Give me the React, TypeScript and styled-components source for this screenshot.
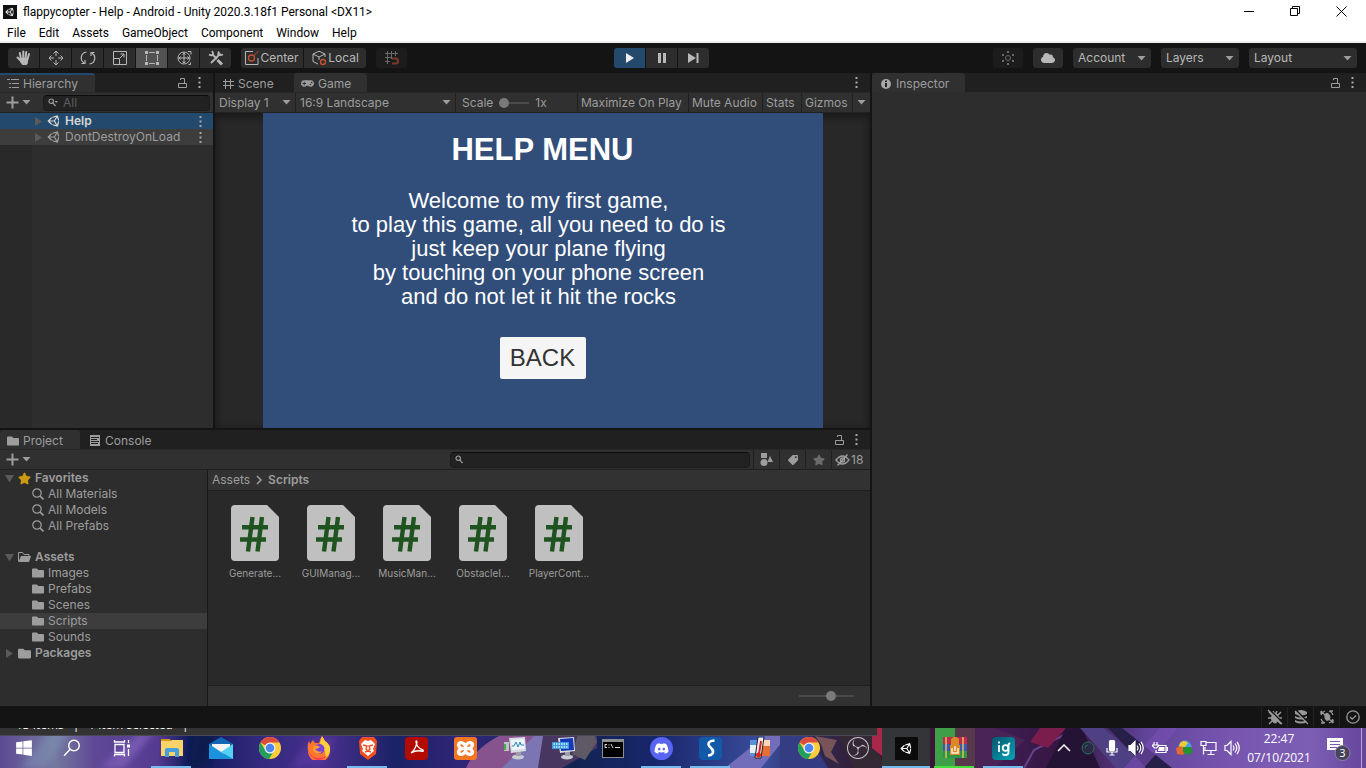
import React from "react";
import styled, { createGlobalStyle, css } from "styled-components";
import { FaUnity, FaDiscord, FaStar, FaTag, FaCloud, FaGamepad, FaFolder, FaWindows } from "react-icons/fa";
import { SiObsstudio } from "react-icons/si";

const ui = '"Inter", "Liberation Sans", sans-serif';
const win = '"Open Sans", "Noto Sans", sans-serif';

const Global = createGlobalStyle`
  * { box-sizing: border-box; }
  body { margin: 0; background: #141414; }
  button, select, input { font: inherit; color: inherit; margin: 0; padding: 0; border: 0; background: none; border-radius: 0; }
  ul { list-style: none; margin: 0; padding: 0; }
  svg { display: block; flex: none; }
`;

const Screen = styled.div`
  display: flex;
  flex-direction: column;
  min-height: 100vh;
  font: 12px/16px ${ui};
  color: #9d9d9d;
  background: #141414;
  white-space: nowrap;
`;

/* ---------- window chrome ---------- */
const TitleBar = styled.header`
  display: flex;
  align-items: center;
  height: 23px;
  padding: 0 2px 0 3px;
  background: #fff;
  color: #000;
  font: 12px/16px "Roboto", sans-serif;
`;
const AppIcon = styled.span`
  display: grid;
  place-items: center;
  width: 14px;
  height: 14px;
  margin-right: 6px;
  background: #111;
  color: #eee;
`;
const WindowTitle = styled.h1`
  flex: 1;
  margin: 0;
  font: inherit;
`;
const WindowButton = styled.button`
  display: grid;
  place-items: center;
  width: 46px;
  height: 22px;
`;
const MenuBar = styled.nav`
  display: flex;
  gap: 13px;
  height: 20px;
  padding-left: 7px;
  background: #fff;
  border-bottom: 2px solid #f0f0f0;
  color: #000;
  font: 12px/20px "Roboto", sans-serif;
`;

/* ---------- editor toolbar ---------- */
const Toolbar = styled.div`
  display: flex;
  height: 30px;
  padding: 5px 0;
  color: #b8b8b8;
`;
const ToolsArea = styled.div`
  display: flex;
  flex: none;
  width: calc(50% - 69px);
  padding-left: 8px;
`;
const ToolGroup = styled.div<{ $after?: number }>`
  display: flex;
  gap: 1px;
  margin-right: ${(p) => p.$after ?? 0}px;
  border-radius: 3px;
  overflow: hidden;
`;
const ToolButton = styled.button<{ $w?: number; $tone?: "active" | "play" | "dim" }>`
  display: flex;
  align-items: center;
  justify-content: center;
  gap: 1px;
  width: ${(p) => p.$w ?? 31}px;
  height: 20px;
  background: ${(p) => (p.$tone === "active" ? "#525252" : p.$tone === "play" ? "#234a6c" : p.$tone === "dim" ? "#1c1c1c" : "#2d2d2d")};
  color: ${(p) => (p.$tone === "dim" ? "#6a6a6a" : p.$tone === "play" ? "#ececec" : "inherit")};
`;
const ToolbarRight = styled.div`
  display: flex;
  flex: 1;
  justify-content: flex-end;
  gap: 10px;
  padding-right: 9px;
`;

const SelectWrap = styled.label<{ $w: number; $boxed?: boolean }>`
  display: flex;
  align-items: center;
  position: relative;
  width: ${(p) => p.$w}px;
  height: 20px;
  ${(p) =>
    p.$boxed
      ? css`
          background: #2d2d2d;
          border-radius: 3px;
        `
      : css`
          border-right: 1px solid #202020;
        `}
  select {
    appearance: none;
    width: 100%;
    height: 20px;
    padding-left: ${(p) => (p.$boxed ? 5 : 4)}px;
    outline: 0;
  }
  svg {
    position: absolute;
    right: ${(p) => (p.$boxed ? 5 : 4)}px;
    pointer-events: none;
  }
`;

/* ---------- docking ---------- */
const Dock = styled.main`
  display: flex;
  flex: 1;
  gap: 2px;
`;
const DockLeft = styled.div`
  display: flex;
  flex-direction: column;
  flex: 870 1 0;
  gap: 2px;
  min-width: 0;
`;
const DockRow = styled.div`
  display: flex;
  flex: 355 1 0;
  gap: 2px;
`;
const Panel = styled.section<{ $grow: number }>`
  display: flex;
  flex-direction: column;
  flex: ${(p) => p.$grow} 1 0;
  min-width: 0;
  background: #2d2d2d;
`;
const TabBar = styled.div`
  display: flex;
  align-items: center;
  height: 19px;
  padding-right: 5px;
  background: #202020;
`;
const Tab = styled.button<{ $w: number; $on?: boolean; $focus?: boolean }>`
  display: flex;
  align-items: center;
  gap: 4px;
  width: ${(p) => p.$w}px;
  height: 19px;
  padding-left: 7px;
  border-top: 2px solid ${(p) => (p.$focus ? "#234a6c" : "transparent")};
  border-radius: ${(p) => (p.$focus ? 0 : 3)}px 3px 0 0;
  background: ${(p) => (p.$on ? "#303030" : "transparent")};
  background-clip: border-box;
`;
const Spacer = styled.div`
  flex: 1;
`;
const IconButton = styled.button`
  display: grid;
  place-items: center;
  width: 17px;
  height: 18px;
`;
const PanelBar = styled.div`
  display: flex;
  align-items: center;
  height: 21px;
  background: #303030;
  border-top: 1px solid #282828;
  border-bottom: 1px solid #202020;
`;
const AddButton = styled.button`
  display: flex;
  flex: none;
  align-items: center;
  gap: 3px;
  width: 39px;
  height: 18px;
  padding-left: 6px;
`;
const SearchBox = styled.label<{ $w?: number }>`
  display: flex;
  align-items: center;
  gap: 5px;
  ${(p) => (p.$w ? `width: ${p.$w}px;` : "flex: 1;")}
  min-width: 0;
  height: 16px;
  margin: 0 3px 0 4px;
  padding-left: 4px;
  background: #222;
  border: 1px solid #1b1b1b;
  border-top-color: #0c0c0c;
  border-radius: 4px;
  input {
    flex: 1;
    min-width: 0;
    height: 14px;
    outline: 0;
  }
  input::placeholder {
    color: #5c5c5c;
    opacity: 1;
  }
`;

/* ---------- hierarchy ---------- */
const SceneList = styled.ul`
  flex: 1;
  background: linear-gradient(90deg, #292929 32px, #2d2d2d 32px);
`;
const SceneRow = styled.li<{ $on?: boolean }>`
  display: flex;
  align-items: center;
  gap: 4px;
  height: 16px;
  padding: 0 4px 0 34px;
  background: ${(p) => (p.$on ? "#234a6c" : "#3d3d3d")};
  color: ${(p) => (p.$on ? "#d6d6d6" : "#9d9d9d")};
  font-weight: ${(p) => (p.$on ? 600 : 400)};
`;

/* ---------- game view ---------- */
const ScaleControl = styled.label`
  display: flex;
  align-items: center;
  gap: 6px;
  flex: 1;
  height: 20px;
  padding-left: 6px;
`;
const Slider = styled.input<{ $w: number }>`
  appearance: none;
  width: ${(p) => p.$w}px;
  height: 10px;
  background: linear-gradient(#4b4b4b, #4b4b4b) center / 100% 2px no-repeat;
  &::-webkit-slider-thumb {
    appearance: none;
    width: 10px;
    height: 10px;
    border-radius: 50%;
    background: #7a7a7a;
  }
`;
const BarButton = styled.button<{ $w: number; $text?: boolean }>`
  display: flex;
  align-items: center;
  justify-content: ${(p) => (p.$text ? "flex-start" : "center")};
  gap: 1px;
  width: ${(p) => p.$w}px;
  height: 20px;
  padding-left: ${(p) => (p.$text ? 3 : 0)}px;
  border-left: 1px solid #202020;
`;
const GameArea = styled.div`
  display: flex;
  justify-content: center;
  flex: 1;
  min-height: 0;
  background: #282828;
  box-shadow: inset 0 5px 8px -2px #181818, inset 0 0 6px #1c1c1c;
`;
const GameScreen = styled.div`
  display: flex;
  flex-direction: column;
  align-items: center;
  width: 560px;
  max-width: 100%;
  background: #314d79;
  color: #fff;
  font-family: "Liberation Sans", sans-serif;
`;
const HelpHeading = styled.h2`
  margin: 19px 0 21px;
  font-size: 31px;
  line-height: 36px;
  font-weight: 700;
`;
const HelpText = styled.p`
  margin: 0 8px 28px 0;
  font-size: 22px;
  line-height: 24px;
  text-align: center;
`;
const BackButton = styled.button`
  width: 86px;
  height: 42px;
  border-radius: 2px;
  background: #f5f5f5;
  color: #323232;
  font-size: 24px;
`;

/* ---------- project ---------- */
const ProjectPanel = styled.section`
  display: flex;
  flex-direction: column;
  flex: 276 1 0;
  background: #2d2d2d;
`;
const ProjectBody = styled.div`
  display: flex;
  flex: 1;
`;
const Tree = styled.ul`
  width: 208px;
  border-right: 1px solid #1a1a1a;
`;
const TreeRow = styled.li<{ $child?: boolean; $on?: boolean; $before?: boolean }>`
  display: flex;
  align-items: center;
  gap: 4px;
  height: 16px;
  margin-top: ${(p) => (p.$before ? 15 : 0)}px;
  padding-left: ${(p) => (p.$child ? 32 : 5)}px;
  background: ${(p) => (p.$on ? "#3d3d3d" : "transparent")};
  font-weight: ${(p) => (p.$child ? 400 : 600)};
`;
const Assets = styled.div`
  display: flex;
  flex-direction: column;
  flex: 1;
  background: #292929;
`;
const Breadcrumb = styled.nav`
  display: flex;
  align-items: center;
  gap: 5px;
  height: 21px;
  padding-left: 4px;
  background: #323232;
  border-bottom: 1px solid #202020;
  b { font-weight: 600; }
`;
const FileGrid = styled.ul`
  display: flex;
  flex-wrap: wrap;
  flex: 1;
  align-content: flex-start;
  padding: 14px 9px;
`;
const FileItem = styled.li`
  display: flex;
  flex-direction: column;
  align-items: center;
  gap: 5px;
  width: 76px;
  font-size: 10px;
  line-height: 14px;
`;
const AssetsFooter = styled.div`
  display: flex;
  align-items: center;
  justify-content: flex-end;
  height: 21px;
  padding-right: 16px;
  background: #323232;
  border-top: 1px solid #202020;
`;
const StatusBar = styled.footer`
  display: flex;
  justify-content: flex-end;
  align-items: center;
  height: 22px;
  padding-right: 1px;
  color: #999;
`;
const StatusButton = styled.button`
  display: grid;
  place-items: center;
  width: 26px;
  height: 20px;
  border-left: 1px solid #222;
`;

/* ---------- taskbar ---------- */
const Taskbar = styled.footer`
  display: flex;
  position: relative;
  height: 40px;
  overflow: hidden;
  background: #3c2a78;
  color: #fff;
  font: 12px/19px ${win};
`;
const Wallpaper = styled.svg`
  position: absolute;
  inset: 0;
  width: 100%;
  height: 100%;
`;
const ExplorerEdge = styled.div`
  display: flex;
  align-items: flex-end;
  gap: 9px;
  position: absolute;
  top: 0;
  left: 0;
  width: 877px;
  height: 8px;
  padding: 0 8px 1px 16px;
  overflow: hidden;
  background: #333;
  color: #fff;
  border-bottom: 1px solid #4a4a52;
`;
const TaskIcons = styled.div`
  display: flex;
  position: relative;
  flex: 1;
`;
const Task = styled.button<{ $w?: number; $line?: string; $bg?: string }>`
  display: grid;
  place-items: center;
  position: relative;
  width: ${(p) => p.$w ?? 49}px;
  height: 40px;
  background: ${(p) => p.$bg ?? "none"};
  ${(p) =>
    p.$line &&
    css`
      &::after {
        content: "";
        position: absolute;
        left: ${p.$w === 48 ? 0 : 4}px;
        right: ${p.$w === 48 ? 0 : 5}px;
        bottom: 0;
        height: 2px;
        background: ${p.$line};
      }
    `}
`;
const Tile = styled.span<{ $bg: string; $r?: number }>`
  display: grid;
  place-items: center;
  width: 23px;
  height: 23px;
  border-radius: ${(p) => p.$r ?? 4}px;
  background: ${(p) => p.$bg};
  color: #fff;
`;
const Tray = styled.div`
  display: flex;
  align-items: center;
  position: relative;
`;
const TrayButton = styled.button`
  display: grid;
  place-items: center;
  width: 24px;
  height: 40px;
`;
const Clock = styled.time`
  display: flex;
  flex-direction: column;
  align-items: center;
  width: 70px;
`;
const NotifyButton = styled.button`
  display: grid;
  place-items: center;
  width: 48px;
  height: 40px;
  border-right: 1px solid #b5a5d8;
  margin-right: 4px;
`;

/* ---------- icons ---------- */
type IconProps = { w?: number; h?: number; vb?: string; sw?: number; fill?: string; stroke?: string; children: React.ReactNode };
const Icon = ({ w = 16, h, vb, sw = 1, fill = "none", stroke = "currentColor", children }: IconProps) => (
  <svg width={w} height={h ?? w} viewBox={vb ?? `0 0 ${w} ${h ?? w}`} fill={fill} stroke={stroke} strokeWidth={sw} aria-hidden="true">
    {children}
  </svg>
);
const Caret = () => (
  <Icon w={9} h={5} fill="#9d9d9d" stroke="none"><path d="M0.500 0h8L4.500 4.500z" /></Icon>
);
const Kebab = () => (
  <Icon w={3} h={13} fill="#a8a8a8" stroke="none"><path d="M0.500 1h2v2h-2zM0.500 5.500h2v2h-2zM0.500 10h2v2h-2z" /></Icon>
);
const Lock = () => (
  <Icon w={9} h={12}><path d="M.5 6.500h8v4h-8zM2.500 3V1.500h4v5" /></Icon>
);
const Plus = () => (
  <Icon w={13} h={13} sw={2}><path d="M6.500 0.500v12M0.500 6.500h12" /></Icon>
);
const Twisty = ({ open }: { open?: boolean }) => (
  <Icon w={9} h={9} fill="#5a5a5a" stroke="none"><path d={open ? "M0 1h9L4.500 8.500z" : "M1 0v9l7-4.500z"} /></Icon>
);
const Magnifier = () => (
  <Icon w={12} h={12} sw={1.2}><circle cx="5" cy="5" r="4.200" /><path d="M8 8l3.500 3.500" strokeWidth="1.600" /></Icon>
);
const SmallSearch = ({ caret }: { caret?: boolean }) => (
  <Icon w={10} h={9} sw={1.2}><circle cx="3.200" cy="3.200" r="2.200" /><path d="M4.800 4.800L7.500 8" />{caret && <path d="M6.500 3h3.500L8.200 5z" fill="currentColor" stroke="none" />}</Icon>
);
const HashFile = () => (
  <Icon w={48} h={56} stroke="none">
    <path d="M4 0h32l12 12v40a4 4 0 0 1-4 4H4a4 4 0 0 1-4-4V4a4 4 0 0 1 4-4z" fill="#c0c0c0" />
    <path d="M21.500 12L17 46.500M31 12L26.500 46.500M11 22.200h26M9 34.500h26" stroke="#1f5420" strokeWidth="4.400" />
  </Icon>
);
const ChromeLogo = () => (
  <Icon w={22} h={22} stroke="none">
    <circle cx="11" cy="11" r="11" fill="#f9cc3c" />
    <path d="M11 11L1.500 5.500A11 11 0 0 1 20.500 5.500H11z" fill="#dc4a3e" />
    <path d="M1.500 5.500A11 11 0 0 0 10 22l5.200-8.500L11 16 6.500 13.500z" fill="#20a05a" />
    <circle cx="11" cy="11" r="5.500" fill="#f2f2f2" /><circle cx="11" cy="11" r="4.300" fill="#4a86ee" />
  </Icon>
);
const Monitor = ({ keys }: { keys?: boolean }) => (
  <Icon w={24} h={24} stroke="none">
    <ellipse cx="15" cy="21" rx="6" ry="2.500" fill="#c9ccd2" /><path d="M13 15h5v5h-5z" fill="#9a9fa8" />
    <path d="M6 2l16-1 1 14-15 2z" fill="#d8dbe0" />
    {keys ? (
      <><path d="M8 3l13-1 1 12-13 1z" fill="#1438b5" /><path d="M0 6h17v7H0z" fill="#3c9ae0" /><path d="M1.500 8h14M1.500 11h14" stroke="#d5edff" strokeWidth="1.500" strokeDasharray="1.500 1" /></>
    ) : (
      <><path d="M8 4l13-1 1 10-13 1z" fill="#eaf6fc" /><path d="M9 10h2l2-4 2 5 2-5 1 3h3" stroke="#3185b5" fill="none" /><path d="M1 6h5v9H1z" fill="#bcc4c4" /><path d="M2 8v6" stroke="#47ac47" strokeWidth="2" /></>
    )}
  </Icon>
);
const Speaker = ({ solid }: { solid?: boolean }) => (
  <Icon w={16} h={16} sw={1.2}>
    <path d="M1 5.500h2l4-4v13l-4-4H1z" fill={solid ? "currentColor" : "none"} />
    <path d="M9 5.500q2 2.500 0 5M11 3.500q3.500 4.500 0 9M13 1.800q4.500 6.200 0 12.400" />
  </Icon>
);

const line = "#76b9ed";

const Wall = () => (
  <Wallpaper viewBox="0 0 1366 40" preserveAspectRatio="none" aria-hidden="true">
    <defs>
      <linearGradient id="sky">
        <stop offset="0" stopColor="#5d4a94" /><stop offset=".04" stopColor="#74799f" /><stop offset=".07" stopColor="#5f4896" />
        <stop offset=".115" stopColor="#553b91" /><stop offset=".14" stopColor="#0d1a57" /><stop offset=".19" stopColor="#33297f" />
        <stop offset=".24" stopColor="#47308c" /><stop offset=".29" stopColor="#1b2265" /><stop offset=".34" stopColor="#302679" />
        <stop offset=".42" stopColor="#122352" /><stop offset=".48" stopColor="#18276c" /><stop offset=".56" stopColor="#3b4d9c" />
        <stop offset=".6" stopColor="#30294e" /><stop offset=".66" stopColor="#38101f" /><stop offset=".72" stopColor="#421f5c" />
        <stop offset=".78" stopColor="#35153f" /><stop offset=".84" stopColor="#61459a" /><stop offset=".9" stopColor="#7855af" />
        <stop offset=".96" stopColor="#7c5fb5" /><stop offset="1" stopColor="#65459b" />
      </linearGradient>
      <filter id="soft"><feGaussianBlur stdDeviation="3" /></filter>
    </defs>
    <rect width="1366" height="40" fill="url(#sky)" />
    <g filter="url(#soft)">
      <path d="M20 40L50 4h20L45 40z" fill="#7f93b8" opacity=".5" />
      <path d="M100 40l40-36h14l-30 36z" fill="#7658b0" />
      <path d="M195 0h24l-12 40h-20z" fill="#071a50" />
      <path d="M290 40l20-30h26l-15 30z" fill="#5938a0" opacity=".7" />
    </g>
    <path d="M466 40q10-24 50-40h38l-40 40z" fill="#86538e" />
    <path d="M502 40l40-40h8l14 12-22 28z" fill="#7b75b3" />
    <path d="M543 8l44-8h10v20l-35 20h-24z" fill="#47365f" />
    <path d="M576 28l16-28 5 14-12 18zM578 6h18l-9 18-15 4z" fill="#5f5966" />
    <path d="M725 40l40-32h22l-26 32z" fill="#716dbb" /><path d="M780 40V8h28l20 32z" fill="#343d83" />
    <path d="M815 8l22 4-6 12 8 12-14-8-4-12z" fill="#79535a" /><path d="M838 8h36l10 32h-30z" fill="#352835" />
    <path d="M872 0h10v28l-10-8z" fill="#a9284a" />
    <path d="M975 0h20l30 12-30 28h-20z" fill="#4a2456" /><path d="M1024 40l10-18 32-16" fill="none" stroke="#63438a" strokeWidth="2" />
    <path d="M1040 0h26l-18 20-18-6z" fill="#7b1d4c" /><path d="M1066 0h16l18 40h-54z" fill="#251335" />
    <path d="M1080 0h24l42 40h-30z" fill="#4f3f83" /><path d="M1108 0h14l50 40h-26z" fill="#262048" /><path d="M1160 0h18l-34 40h-20z" fill="#7a4eb5" opacity=".6" />
  </Wallpaper>
);

const menus = ["File", "Edit", "Assets", "GameObject", "Component", "Window", "Help"];
const files = ["Generate...", "GUIManag...", "MusicMan...", "ObstacleI...", "PlayerCont..."];
const folders = ["Images", "Prefabs", "Scenes", "Scripts", "Sounds"];

export default function App() {
  return (
    <Screen>
      <Global />
      <TitleBar>
        <AppIcon><FaUnity size={10} /></AppIcon>
        <WindowTitle>flappycopter - Help - Android - Unity 2020.3.18f1 Personal &lt;DX11&gt;</WindowTitle>
        <WindowButton aria-label="Minimize"><Icon w={11}><path d="M0 5.500h10" /></Icon></WindowButton>
        <WindowButton aria-label="Restore"><Icon w={11}><path d="M.5 2.500h7v7h-7zM2.500 2.500v-2h7v7h-2" /></Icon></WindowButton>
        <WindowButton aria-label="Close"><Icon w={11}><path d="M.5.5l10 10M10.500.5l-10 10" /></Icon></WindowButton>
      </TitleBar>
      <MenuBar>{menus.map((m) => <span key={m}>{m}</span>)}</MenuBar>

      <Toolbar>
        <ToolsArea>
          <ToolGroup $after={10}>
            <ToolButton aria-label="Hand">
              <Icon w={16} sw={2}><path d="M5 9L3.800 3M7.300 8V1.500M9.600 8l.6-6M11.500 9l1.500-5M5 11L1.500 7.500" strokeLinecap="round" /><path d="M4 8h8.500l-.8 5.500L10.500 15h-4L4 12z" fill="currentColor" stroke="none" /></Icon>
            </ToolButton>
            <ToolButton aria-label="Move">
              <Icon w={16}><path d="M8 1V6M8 10v5M1 8H6M10 8h5M5.500 3.500L8 1l2.500 2.500M5.500 12.500L8 15l2.500-2.500M3.500 5.500L1 8l2.500 2.500M12.500 5.500L15 8l-2.500 2.500" /></Icon>
            </ToolButton>
            <ToolButton aria-label="Rotate">
              <Icon w={16} sw={1.200}><path d="M6.500 2A6 6 0 0 0 4 13M1.500 13.500h3.500V10M9.500 14A6 6 0 0 0 12 3M14.500 2.500H11V6" /></Icon>
            </ToolButton>
            <ToolButton aria-label="Scale">
              <Icon w={16}><path d="M1.500 1.500h13v13h-13zM1.500 8.500h6v6M8 8l4-4M8.500 4H12v3.500" /></Icon>
            </ToolButton>
            <ToolButton $tone="active" aria-label="Rect">
              <Icon w={16}><path d="M5 2.500h6M5 13.500h6M2.500 5v6M13.500 5v6" /><path d="M1 1h3v3h-3zM12 1h3v3h-3zM1 12h3v3h-3zM12 12h3v3h-3z" fill="currentColor" stroke="none" /></Icon>
            </ToolButton>
            <ToolButton aria-label="Transform">
              <Icon w={16}><circle cx="8" cy="8" r="6" /><path d="M8 3v10M3 8h10M6.500 4.500L8 3l1.500 1.500M6.500 11.500L8 13l1.500-1.500M4.500 6.500L3 8l1.500 1.500M11.500 6.500L13 8l-1.500 1.500M12 1.500h3v3M12.500 14.500h2v-2" /></Icon>
            </ToolButton>
            <ToolButton aria-label="Custom tools">
              <Icon w={16} sw={1.800}><path d="M4.500 4.500L9 9M12.500 3.500L3 13" /><path d="M9.500 10l4.500 4.500" strokeWidth="3" /><path d="M1 4.500q3 1.500 3.800 0T4 1M11 1.500q-1.500 3 0 3.500t4-.5" /></Icon>
            </ToolButton>
          </ToolGroup>
          <ToolGroup $after={10}>
            <ToolButton $w={62}>
              <Icon w={14} h={16}><path d="M13 8v6.500H.5v-13H8" /><circle cx="6.500" cy="8" r="3" stroke="#c2512f" strokeWidth="1.400" /><path d="M9 5.500L13.500 1" stroke="#c2512f" /></Icon>Center
            </ToolButton>
            <ToolButton $w={62}>
              <Icon w={16}><path d="M14 7V4L8 1.200 2 4v7.500l5 2.500M2 4l6 3 6-3M8 7v3" /><circle cx="12" cy="12" r="2.500" stroke="#c2512f" strokeWidth="1.400" /></Icon>Local
            </ToolButton>
          </ToolGroup>
          <ToolGroup>
            <ToolButton $tone="dim" aria-label="Grid snapping">
              <Icon w={16}><path d="M1 3.500h13M1 7.500h6M1 11.500h5M3.500 1v13M7.500 1v8M11.500 1v5" /><path d="M8 8.500h4q2 0 2 2.500t-2 2.500H8" stroke="#7a3a26" strokeWidth="2" /></Icon>
            </ToolButton>
          </ToolGroup>
        </ToolsArea>
        <ToolGroup>
          <ToolButton $tone="play" aria-label="Play"><Icon w={10} fill="currentColor" stroke="none"><path d="M1 0v10l8-5z" /></Icon></ToolButton>
          <ToolButton aria-label="Pause"><Icon w={10} fill="currentColor" stroke="none"><path d="M1 0h3v10H1zM6 0h3v10H6z" /></Icon></ToolButton>
          <ToolButton aria-label="Step"><Icon w={11} h={10} fill="currentColor" stroke="none"><path d="M0 0v10l8-5zM8.500 0h2v10h-2z" /></Icon></ToolButton>
        </ToolGroup>
        <ToolbarRight>
          <ToolGroup><ToolButton $w={30} $tone="dim" aria-label="Collab">
            <Icon w={14}><circle cx="7" cy="7" r="2.500" /><path d="M7 0v2M7 12v2M1 4h2M1 10h2M11 4h2M11 10h2" strokeWidth="2" /></Icon>
          </ToolButton></ToolGroup>
          <ToolGroup><ToolButton $w={30} aria-label="Services"><FaCloud size={14} /></ToolButton></ToolGroup>
          {[["Account", 78], ["Layers", 78], ["Layout", 108]].map(([t, w]) => (
            <SelectWrap key={t} $boxed $w={w as number}><select aria-label={t as string}><option>{t}</option></select><Caret /></SelectWrap>
          ))}
        </ToolbarRight>
      </Toolbar>

      <Dock>
        <DockLeft>
          <DockRow>
            <Panel $grow={213}>
              <TabBar>
                <Tab $w={95} $on $focus><Icon w={12} h={12}><path d="M0 1.500h3M4 1.500h8M2 5.500h2M5 5.500h7M2 9.500h2M5 9.500h7" /></Icon>Hierarchy</Tab>
                <Spacer /><IconButton aria-label="Lock"><Lock /></IconButton><IconButton aria-label="Hierarchy menu"><Kebab /></IconButton>
              </TabBar>
              <PanelBar>
                <AddButton aria-label="Create"><Plus /><Caret /></AddButton>
                <SearchBox><SmallSearch caret /><input placeholder="All" aria-label="Search hierarchy" /></SearchBox>
              </PanelBar>
              <SceneList>
                <SceneRow $on><Twisty /><FaUnity size={14} />Help<Spacer /><IconButton aria-label="Help scene menu"><Kebab /></IconButton></SceneRow>
                <SceneRow><Twisty /><FaUnity size={14} />DontDestroyOnLoad<Spacer /><IconButton aria-label="DontDestroyOnLoad scene menu"><Kebab /></IconButton></SceneRow>
              </SceneList>
            </Panel>
            <Panel $grow={655}>
              <TabBar>
                <Tab $w={79}><Icon w={12} h={12}><path d="M1 3.500h11M1 7.500h11M3.500 1v10M8.500 1v10" /></Icon>Scene</Tab>
                <Tab $w={73} $on><FaGamepad size={13} />Game</Tab>
                <Spacer /><IconButton aria-label="Game menu"><Kebab /></IconButton>
              </TabBar>
              <PanelBar>
                <SelectWrap $w={81}><select aria-label="Display"><option>Display 1</option></select><Caret /></SelectWrap>
                <SelectWrap $w={160}><select aria-label="Aspect"><option>16:9 Landscape</option></select><Caret /></SelectWrap>
                <ScaleControl>Scale<Slider type="range" $w={30} min={1} max={5} defaultValue={1} />1x</ScaleControl>
                <BarButton $text $w={111}>Maximize On Play</BarButton>
                <BarButton $text $w={74}>Mute Audio</BarButton>
                <BarButton $text $w={39}>Stats</BarButton>
                <BarButton $text $w={51}>Gizmos</BarButton>
                <BarButton $w={18} aria-label="Gizmo options"><Caret /></BarButton>
              </PanelBar>
              <GameArea>
                <GameScreen>
                  <HelpHeading>HELP MENU</HelpHeading>
                  <HelpText>
                    Welcome to my first game,<br />to play this game, all you need to do is<br />just keep your plane flying<br />by touching on your phone screen<br />and do not let it hit the rocks
                  </HelpText>
                  <BackButton>BACK</BackButton>
                </GameScreen>
              </GameArea>
            </Panel>
          </DockRow>
          <ProjectPanel>
            <TabBar>
              <Tab $w={80} $on><FaFolder size={12} />Project</Tab>
              <Tab $w={80}><Icon w={14} h={12} stroke="none" fill="currentColor"><path fillRule="evenodd" d="M3 0h10v11H3zM4 2v1h8V2zM4 4v1h6v-1zM4 6v1h8v-1zM4 8v1h7v-1z" /></Icon>Console</Tab>
              <Spacer /><IconButton aria-label="Lock project"><Lock /></IconButton><IconButton aria-label="Project menu"><Kebab /></IconButton>
            </TabBar>
            <PanelBar>
              <AddButton aria-label="Create asset"><Plus /><Caret /></AddButton><Spacer />
              <SearchBox $w={300}><SmallSearch /><input aria-label="Search project" /></SearchBox>
              <BarButton $w={26} aria-label="Search by type"><Icon w={13} h={13} fill="currentColor" stroke="none"><path d="M1 0h6v5H1zM10 3l3 6H7.500z" /><circle cx="4" cy="9.500" r="3.500" /></Icon></BarButton>
              <BarButton $w={26} aria-label="Search by label"><FaTag size={10} style={{ transform: "scaleX(-1)" }} /></BarButton>
              <BarButton $w={26} aria-label="Save search"><FaStar size={12} color="#6b6b6b" /></BarButton>
              <BarButton $text $w={39} aria-label="Hidden packages"><Icon w={15} h={12} sw={1.400}><path d="M1 6q6.500-8 13 0q-6.500 8-13 0zM2.500 11.500L12.500 .5" /><circle cx="7.500" cy="6" r="2" /></Icon>18</BarButton>
            </PanelBar>
            <ProjectBody>
              <Tree>
                <TreeRow><Twisty open /><FaStar size={13} color="#cc9a10" />Favorites</TreeRow>
                {["All Materials", "All Models", "All Prefabs"].map((t) => <TreeRow key={t} $child><Magnifier />{t}</TreeRow>)}
                <TreeRow $before><Twisty open /><Icon w={13} h={12}><path d="M.5 10.500v-9h4l1.500 2H11v2" /><path d="M.5 11l2.500-6h10l-2 6z" fill="currentColor" stroke="none" /></Icon>Assets</TreeRow>
                {folders.map((t) => <TreeRow key={t} $child $on={t === "Scripts"}><FaFolder size={12} />{t}</TreeRow>)}
                <TreeRow><Twisty /><FaFolder size={13} />Packages</TreeRow>
              </Tree>
              <Assets>
                <Breadcrumb>Assets<Icon w={8} h={10} sw={1.500}><path d="M2 1l4 4-4 4" /></Icon><b>Scripts</b></Breadcrumb>
                <FileGrid>{files.map((f) => <FileItem key={f}><HashFile />{f}</FileItem>)}</FileGrid>
                <AssetsFooter><Slider type="range" $w={55} min={0} max={100} defaultValue={60} aria-label="Icon size" /></AssetsFooter>
              </Assets>
            </ProjectBody>
          </ProjectPanel>
        </DockLeft>
        <Panel as="aside" $grow={494}>
          <TabBar>
            <Tab $w={93} $on><Icon w={13} h={12} stroke="none"><circle cx="7" cy="6" r="5" fill="#a8a8a8" /><path d="M6 2.500h2v1.500H6zM6 5h2v4H6z" fill="#222" /></Icon>Inspector</Tab>
            <Spacer /><IconButton aria-label="Lock inspector"><Lock /></IconButton><IconButton aria-label="Inspector menu"><Kebab /></IconButton>
          </TabBar>
        </Panel>
      </Dock>

      <StatusBar>
        <StatusButton aria-label="Debug mode"><Icon w={16}><ellipse cx="8" cy="9" rx="3.500" ry="5" fill="currentColor" /><path d="M2 3l3 3M14 3l-3 3M1 9h14M2 15l3-3M14 15l-3-3M6 2l1 2M10 2L9 4" strokeWidth="1.500" /><path d="M2 0l14 14" stroke="#141414" strokeWidth="1.500" /><path d="M1 1l14 14" strokeWidth="1.300" /></Icon></StatusButton>
        <StatusButton aria-label="Cache server"><Icon w={16} fill="currentColor" stroke="none"><path d="M2 3q6-4 12 0v2q-6 3-12 0zM2 7q6 3 12 0v2q-6 3-12 0zM2 11q6 3 12 0v2q-6 3-12 0z" /><path d="M3 1l13 13" stroke="#141414" strokeWidth="1.500" /><path d="M2 2l13 13" stroke="currentColor" strokeWidth="1.300" /></Icon></StatusButton>
        <StatusButton aria-label="Auto lighting"><Icon w={16} sw={1.300}><path d="M2 6q1-3 4-4M14 6q-1-3-4-4M2 10q1 3 4 4M14 10q-1 3-4 4M2 2l12 12M2 2v3M14 2h-3M14 14v-3M2 14h3" /><path d="M6 6q2-3 4 0t-1 5H7.500q-2-2-1.500-5z" fill="currentColor" /></Icon></StatusButton>
        <StatusButton aria-label="Progress"><Icon w={16} sw={1.300}><circle cx="8" cy="8" r="6.200" /><path d="M5 8l2.200 2.200L11 6.500" /></Icon></StatusButton>
      </StatusBar>

      <Taskbar>
        <Wall />
        <ExplorerEdge><span>13 items</span><span>|</span><span>1 item selected</span><span>|</span></ExplorerEdge>
        <TaskIcons>
          <Task $w={48} aria-label="Start"><FaWindows size={18} /></Task>
          <Task $w={48} aria-label="Search"><Icon w={18} sw={1.400}><circle cx="11" cy="6.500" r="5.300" /><path d="M7.200 10.300L1 16.800" /></Icon></Task>
          <Task $w={51} aria-label="Task view"><Icon w={18} sw={1.300}><path d="M2 5.500h9v8H2zM1.500 1v2h10V1M1.500 17.500v-2h10v2M15.500 1v3M15.500 10v7" /><path d="M14 5.500h3v3h-3z" fill="currentColor" stroke="none" /></Icon></Task>
          <Task $line={line} aria-label="File Explorer"><Icon w={22} h={20} stroke="none"><path d="M0 1h9l1 2H0z" fill="#d39a18" /><path d="M0 3h9l2-1h11v16H0z" fill="#fbd469" /><path d="M4 19v-8l2-1h10l2 1v8h-4v-5H8v5z" fill="#459fdc" /></Icon></Task>
          <Task aria-label="Mail"><Icon w={24} h={22} stroke="none"><path d="M0 7l12-7 12 7v15H0z" fill="#1266b5" /><path d="M3 7h18v7l-9 4-9-4z" fill="#f3f3f3" /><path d="M0 7l12 8L24 22H0z" fill="#1b93dc" /><path d="M24 7L12 15l12 7z" fill="#54d0f5" /></Icon></Task>
          <Task aria-label="Chrome"><ChromeLogo /></Task>
          <Task aria-label="Firefox"><Icon w={24} h={24} stroke="none"><path d="M2 5l1 3 3-4 2 3h4q1-4 3-7l3 5q6 4 5 10a11 11 0 0 1-22 0Q0 9 2 5z" fill="#ff7630" /><path d="M15 0l3 5q6 4 5 10-1 5-5 7 2-8-5-12 0-6 2-10z" fill="#ffce3a" /><path d="M1 13q2 9 11 9 6 0 8-4-2 6-9 6Q2 22 1 13z" fill="#ff3c55" /><circle cx="12.500" cy="13" r="5" fill="#7a44d8" /><path d="M6 11q4-3 7 0-2 2-5 2 3 4 7 2-2 4-6 2-4-2-3-6z" fill="#ffa02c" /></Icon></Task>
          <Task $line={line} aria-label="Brave"><Icon w={20} h={24} stroke="none"><path d="M4 1h12l3 4-1 13-8 6-8-6L1 5z" fill="#f04e23" /><path d="M10 5l3-1 4 4-2 5 1 2-6 5-6-5 1-2-2-5 4-4z" fill="#fff" /><path d="M5 9l4 1-1 3 2 2 2-2-1-3 4-1M7 16l3-1 3 1" fill="none" stroke="#f04e23" strokeWidth="1.400" /></Icon></Task>
          <Task aria-label="Acrobat"><Tile $bg="#b30b00"><Icon w={16} sw={1.400}><path d="M2 13q5-4 6-11q-1-2-1 0q1 6 7 8q1 2-2 1-5-1-10 2z" /></Icon></Tile></Task>
          <Task aria-label="XAMPP"><Tile $bg="#f37623" $r={3}><Icon w={19} h={17} sw={3.400}><path d="M9.500 5.500Q6 1 3 3.500 1.500 6 5 8.500 1.500 11 3 13.500 6 16 9.500 11.500 13 16 16 13.500 17.500 11 14 8.500 17.500 6 16 3.500 13 1 9.500 5.500zM6 8.500h7" strokeLinejoin="round" /></Icon></Tile></Task>
          <Task aria-label="Performance monitor"><Monitor /></Task>
          <Task aria-label="Remote desktop"><Monitor keys /></Task>
          <Task aria-label="Command prompt"><Icon w={22} h={19} stroke="none"><path d="M0 0h22v19H0z" fill="#8d8f92" /><path d="M1 3h20v15H1z" fill="#000" /><path d="M5 5.500H3v3h2M7 5.500v1M7 8v1M9 5l2 4M13 8.500h5" stroke="#ddd" /></Icon></Task>
          <Task $line={line} aria-label="Discord"><Tile $bg="#5865f2" $r={12}><FaDiscord size={15} /></Tile></Task>
          <Task $line={line} aria-label="S"><Tile $bg="#1259a8"><Icon w={12} h={18} sw={2.600}><path d="M9.500 1.500Q3 2 3.500 5.500q.5 2 3 4Q9 12 7.500 14.500 6 16.500 3 16.500" /></Icon></Tile></Task>
          <Task aria-label="Temperature monitor"><Icon w={22} h={22} stroke="none"><path d="M1 3h9v16H1z" fill="#5792dc" /><path d="M1 8h9v8H1z" fill="#e6eef8" /><path d="M12 3h9v16h-9z" fill="#e86e31" /><path d="M12 3h9v6h-9z" fill="#fbd9b8" /><path d="M9 0h6l-3 21H6z" fill="#eee" stroke="#222" /><path d="M12 4l-2 13" stroke="#d22" strokeWidth="2" /><circle cx="9.500" cy="18" r="2.500" fill="#d22" /></Icon></Task>
          <Task aria-label="Chrome profile"><ChromeLogo /></Task>
          <Task aria-label="OBS Studio"><SiObsstudio size={22} color="#c8c8cc" /></Task>
          <Task $w={48} $line={line} $bg="#333538" aria-label="Unity"><Tile $bg="#0b0b0b" $r={1}><FaUnity size={13} /></Tile></Task>
          <Task $line="#44e03c" $bg="linear-gradient(90deg, transparent 5px, #3f9f48 5px, #3f9f48 25px, #58384b 25px, #58384b 45px, transparent 45px)" aria-label="WinRAR">
            <Icon w={24} h={22} stroke="none"><path d="M0 0h24v7H0z" fill="#c02a50" /><path d="M0 7h24v7H0z" fill="#3958b8" /><path d="M0 14h24v7H0z" fill="#2c9648" /><path d="M3 0v21M20 0v21" stroke="#e0c050" strokeWidth="1.500" /><path d="M8 2l4-3 4 3v6h1v10H7V8h1z" fill="#d98a25" /><path d="M9 11v5h6v-5M12 9v5" stroke="#f5efe0" strokeWidth="1.500" fill="none" /></Icon>
          </Task>
          <Task $line={line} aria-label="ig"><Tile $bg="linear-gradient(135deg, #06566f, #05a3b5)"><Icon w={16} h={16} sw={1.800}><path d="M3 5v7M3 1.500v2" /><circle cx="9.500" cy="8" r="2.800" /><path d="M12.500 4.500v8q0 2.500-3 2.500T7 13.500M12 5l2-2" /></Icon></Tile></Task>
        </TaskIcons>
        <Tray>
          <TrayButton aria-label="Show hidden icons"><Icon w={14} h={8} sw={1.500}><path d="M1 7l6-6 6 6" /></Icon></TrayButton>
          <TrayButton aria-label="Recorder"><Icon w={14} stroke="#267058"><circle cx="7" cy="7" r="6" fill="#2b2946" /><path d="M4 7q0-3 3-3" /></Icon></TrayButton>
          <TrayButton aria-label="Microphone"><Icon w={12} h={16} sw={1.200}><rect x="3.500" y=".6" width="5" height="10" rx="1" fill="currentColor" /><path d="M1 8v4h10V8M6 12v3M3.500 15h5" /></Icon></TrayButton>
          <TrayButton aria-label="Audio"><Speaker solid /></TrayButton>
          <TrayButton aria-label="Battery"><Icon w={16} h={14} sw={1.200}><path d="M6 4.500h8v7H4V9M14 6.500h1.500v3H14M2 1v3M5 1v3M.5 4h6v1l-2 2h-2l-2-2z" /><path d="M7 6h5.500v4H6z" fill="currentColor" stroke="none" /></Icon></TrayButton>
          <TrayButton aria-label="Download manager"><Icon w={17} h={16} stroke="none"><circle cx="9" cy="7" r="6.500" fill="#4b9fe3" /><path d="M4 3q4-4 8 0l-4 5-5-1z" fill="#eecb35" /><path d="M0 8l5-2 5 4-3 5-6-1z" fill="#e5682d" /><path d="M7 7h8l2 5-5 3-5-3z" fill="#23912d" /></Icon></TrayButton>
          <TrayButton aria-label="Network"><Icon w={17} h={16} sw={1.200}><path d="M6 2.500h10v8H5V7M11 10.500V14M7.500 14.500h7M1 1.500h5v4H1zM3.500 5.500v9" /></Icon></TrayButton>
          <TrayButton aria-label="Volume"><Speaker /></TrayButton>
          <Clock><span>22:47</span><span>07/10/2021</span></Clock>
          <NotifyButton aria-label="Notifications, 3 new">
            <Icon w={26} h={26} stroke="none"><path d="M2 3h16v12h-5l-3 4v-4H2z" fill="#fff" /><path d="M5 6.500h10M5 9.500h10M5 12.500h7" stroke="#7a5ab0" /><circle cx="17.500" cy="18" r="7.500" fill="#45435a" stroke="#8b82a5" /><text x="17.500" y="22" textAnchor="middle" fill="#fff" fontSize="11">3</text></Icon>
          </NotifyButton>
        </Tray>
      </Taskbar>
    </Screen>
  );
}
